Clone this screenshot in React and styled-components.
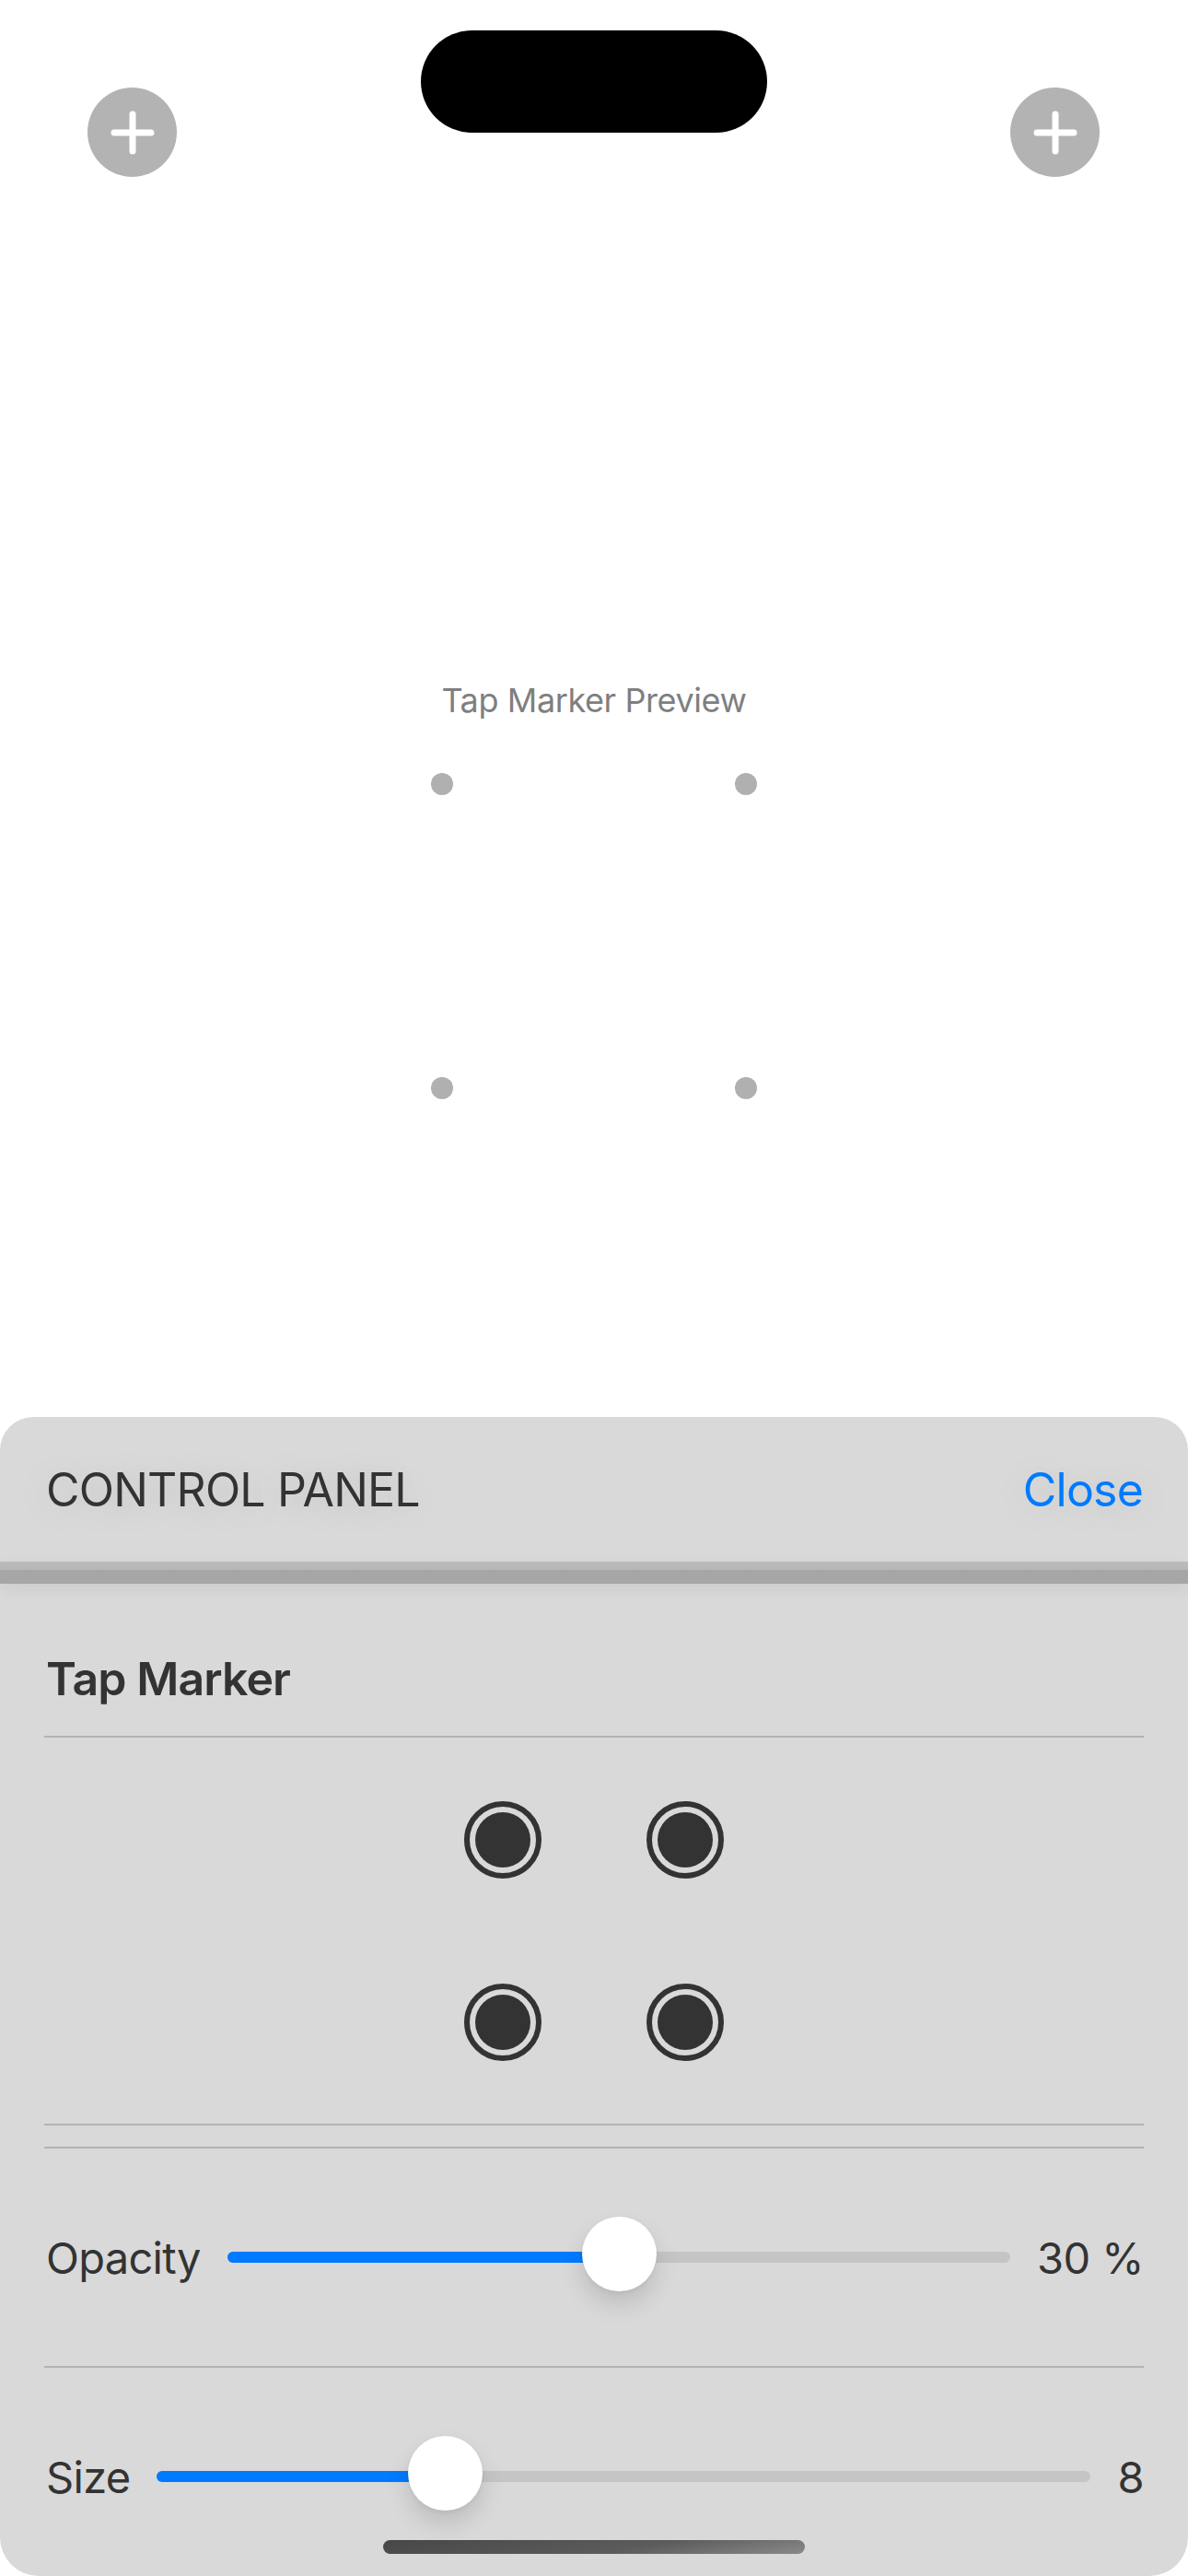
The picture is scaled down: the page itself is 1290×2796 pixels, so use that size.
import React from 'react';
import styled, { createGlobalStyle } from 'styled-components';

const GlobalStyle = createGlobalStyle`
  html, body {
    margin: 0;
    padding: 0;
    background: #ffffff;
  }
  body {
    font-family: Inter, "Noto Sans", sans-serif;
    -webkit-font-smoothing: antialiased;
  }
`;

const Screen = styled.div`
  position: relative;
  width: 1290px;
  height: 2796px;
  display: flex;
  flex-direction: column;
  background: #ffffff;
  overflow: hidden;
`;

const Island = styled.div`
  position: absolute;
  top: 33px;
  left: 50%;
  transform: translateX(-50%);
  width: 376px;
  height: 111px;
  border-radius: 56px;
  background: #000;
`;

const Toolbar = styled.div`
  display: flex;
  justify-content: space-between;
  padding: 95px 96px 0 95px;
`;

const RoundButton = styled.button`
  width: 97px;
  height: 97px;
  padding: 0;
  border: none;
  border-radius: 50%;
  background: #b3b3b3;
  display: flex;
  align-items: center;
  justify-content: center;
`;

const Preview = styled.div`
  display: flex;
  flex-direction: column;
  align-items: center;
`;

const PreviewTitle = styled.div`
  margin-top: 546px;
  font-size: 36px;
  line-height: 44px;
  color: #7f7f7f;
  letter-spacing: -0.4px;
`;

const DotGrid = styled.div`
  margin-top: 57px;
  display: grid;
  grid-template-columns: repeat(2, 24px);
  gap: 306px;
`;

const Dot = styled.span`
  width: 24px;
  height: 24px;
  border-radius: 50%;
  background: #b0b0b0;
`;

const Panel = styled.section`
  position: relative;
  margin-top: auto;
  height: 1258px;
  background: #d9d9d9;
  border-radius: 36px 36px 42px 42px;
  overflow: hidden;
`;

const PanelHeader = styled.header`
  height: 157px;
  display: flex;
  align-items: center;
  justify-content: space-between;
  padding: 0 49px 0 50px;
`;

const HeaderText = styled.span`
  font-size: 50px;
  letter-spacing: -0.8px;
  color: ${(p) => (p.$accent ? '#007aff' : '#333333')};
  text-shadow: 0 4px 44px rgba(0, 0, 0, 0.14);
`;

const HeaderRule = styled.div`
  height: 24px;
  background: linear-gradient(to bottom, #bbbbbb 0, #b7b7b7 9px, #a6a6a7 9px, #a6a6a7 100%);
  box-shadow: 0 6px 18px rgba(0, 0, 0, 0.06);
`;

const Content = styled.div`
  padding: 0 48px;
`;

const SectionTitle = styled.h2`
  margin: 0;
  padding: 73px 0 32px 2px;
  font-size: 50px;
  line-height: 60px;
  font-weight: 600;
  letter-spacing: -0.9px;
  color: #333333;
  border-bottom: 2px solid #b3b3b3;
`;

const MarkerGrid = styled.div`
  display: grid;
  grid-template-columns: repeat(2, 84px);
  gap: 114px;
  justify-content: center;
  padding: 69px 0 68px;
  border-bottom: 2px solid #b3b3b3;
`;

const Marker = styled.span`
  box-sizing: border-box;
  width: 84px;
  height: 84px;
  border-radius: 50%;
  border: 6px solid #333333;
  padding: 6px;
  background: #333333;
  background-clip: content-box;
`;

const SliderList = styled.div`
  margin-top: 23px;
  border-top: 2px solid #b3b3b3;
`;

const SliderRow = styled.div`
  height: 236px;
  display: flex;
  align-items: center;
  gap: 29px;
  border-bottom: 2px solid #b3b3b3;
`;

const RowLabel = styled.span`
  font-size: 47px;
  letter-spacing: -0.7px;
  color: #333333;
  padding-left: 2px;
`;

const RowValue = styled.span`
  font-size: 47px;
  letter-spacing: -0.5px;
  color: #333333;
`;

const Track = styled.div`
  position: relative;
  flex: 1;
  height: 12px;
  border-radius: 6px;
  background: #c5c5c7;
`;

const Fill = styled.div`
  height: 100%;
  border-radius: 6px;
  background: #007aff;
`;

const Thumb = styled.div`
  position: absolute;
  top: 50%;
  width: 81px;
  height: 81px;
  margin: -44px 0 0 -40px;
  border-radius: 50%;
  background: #ffffff;
  box-shadow: 0 14px 26px rgba(0, 0, 0, 0.13), 0 2px 5px rgba(0, 0, 0, 0.05);
`;

const HomeIndicator = styled.div`
  position: absolute;
  left: 50%;
  bottom: 24px;
  transform: translateX(-50%);
  width: 458px;
  height: 15px;
  border-radius: 8px;
  background: linear-gradient(170deg, #474747 0%, #5c5c5c 60%, #8a8a8a 100%);
`;

const PlusIcon = () => (
  <svg width="50" height="50" viewBox="0 0 50 50">
    <path d="M25 5v40M5 25h40" stroke="#ffffff" strokeWidth="7" strokeLinecap="round" />
  </svg>
);

const Slider = ({ label, value, fraction }) => {
  // thumb travels inside the track, inset by its own radius
  const pos = `calc(40px + (100% - 80px) * ${fraction})`;
  return (
    <SliderRow>
      <RowLabel>{label}</RowLabel>
      <Track>
        <Fill style={{ width: pos }} />
        <Thumb style={{ left: pos }} />
      </Track>
      <RowValue>{value}</RowValue>
    </SliderRow>
  );
};

export default function App() {
  return (
    <>
      <GlobalStyle />
      <Screen>
        <Island />
        <Toolbar>
          <RoundButton aria-label="Add">
            <PlusIcon />
          </RoundButton>
          <RoundButton aria-label="Add">
            <PlusIcon />
          </RoundButton>
        </Toolbar>

        <Preview>
          <PreviewTitle>Tap Marker Preview</PreviewTitle>
          <DotGrid>
            <Dot />
            <Dot />
            <Dot />
            <Dot />
          </DotGrid>
        </Preview>

        <Panel>
          <PanelHeader>
            <HeaderText>CONTROL PANEL</HeaderText>
            <HeaderText $accent>Close</HeaderText>
          </PanelHeader>
          <HeaderRule />
          <Content>
            <SectionTitle>Tap Marker</SectionTitle>
            <MarkerGrid>
              <Marker />
              <Marker />
              <Marker />
              <Marker />
            </MarkerGrid>
            <SliderList>
              <Slider label="Opacity" value="30 %" fraction={0.5} />
              <Slider label="Size" value="8" fraction={7 / 24} />
            </SliderList>
          </Content>
          <HomeIndicator />
        </Panel>
      </Screen>
    </>
  );
}
